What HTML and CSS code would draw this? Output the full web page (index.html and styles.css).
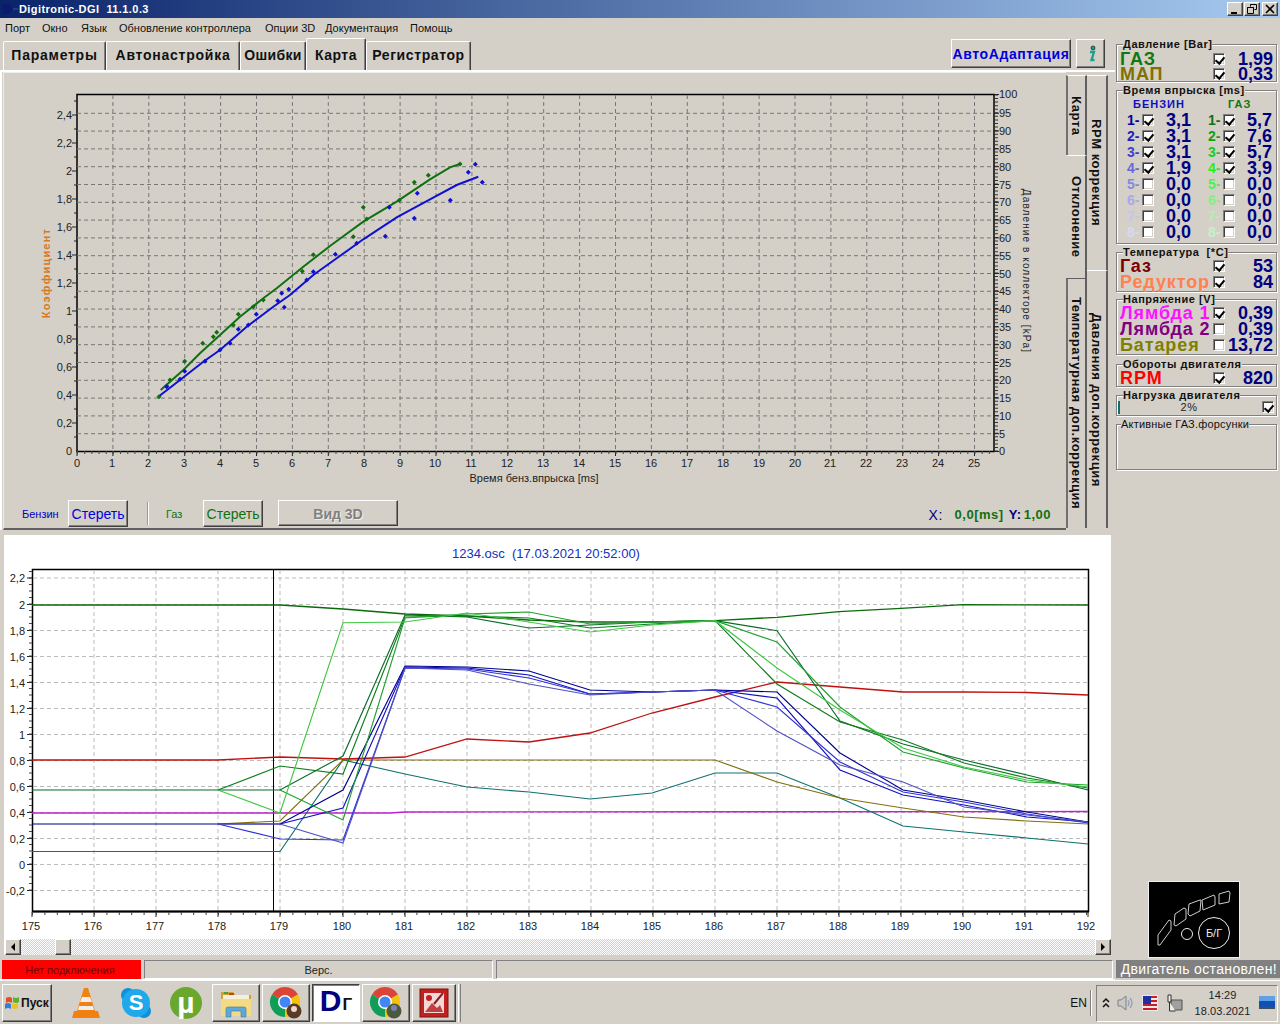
FILE: index.html
```html
<!DOCTYPE html>
<html lang="ru">
<head>
<meta charset="utf-8">
<title>Digitronic-DGI 11.1.0.3</title>
<link rel="stylesheet" href="styles.css">
</head>
<body>
<div class="app">
  <header class="titlebar">
    <svg class="app-ico" width="16" height="14" viewBox="0 0 16 14"><path class="ico-navy" d="M1 2h6l4 5-4 5H1z"/><path class="ico-navy2" d="M11 6h5v2h-5z"/></svg>
    <span class="title-text">Digitronic-DGI&nbsp; 11.1.0.3</span>
    <div class="winbtns">
      <button class="winbtn"><svg width="10" height="10" viewBox="0 0 10 10"><path d="M1 8h6v2H1z"/></svg></button>
      <button class="winbtn"><svg width="10" height="10" viewBox="0 0 10 10"><path class="ico-line" d="M3.500 2.500V.5h6v5h-2M.5 3.500h6v6h-6zM.5 3.500h6"/></svg></button>
      <button class="winbtn winbtn-close"><svg width="10" height="10" viewBox="0 0 10 10"><path class="ico-line2" d="M1 1l8 8M9 1l-8 8"/></svg></button>
    </div>
  </header>
  <nav class="menu">
    <span class="m1">Порт</span><span class="m2">Окно</span><span class="m3">Язык</span><span class="m4">Обновление контроллера</span><span class="m5">Опции 3D</span><span class="m6">Документация</span><span class="m7">Помощь</span>
  </nav>
  <div class="body-grid">
    <main class="leftcol">
      <div class="tabbar">
        <div class="tab t1">Параметры</div>
        <div class="tab t2">Автонастройка</div>
        <div class="tab t3">Ошибки</div>
        <div class="tab t4 active">Карта</div>
        <div class="tab t5">Регистратор</div>
        <button class="btn adapt">АвтоАдаптация</button>
        <button class="btn info"><svg width="12" height="18" viewBox="0 0 12 18"><circle class="i-fill" cx="8" cy="3" r="2"/><path class="i-body" d="M5 7h4L6.500 15h3"/></svg></button>
      </div>
      <section class="tabpage">
        <div class="mapwrap">
          <svg class="chart-top" width="1063" height="426" viewBox="3 74 1063 426">
            <rect class="plot-top" x="77" y="94.500" width="917" height="357"/>
            <path class="grid-top" d="M77 433.700H994M77 415.900H994M77 398.100H994M77 380.300H994M77 362.500H994M77 344.700H994M77 326.900H994M77 309.100H994M77 291.300H994M77 273.500H994M77 255.700H994M77 237.900H994M77 220.100H994M77 202.300H994M77 184.500H994M77 166.700H994M77 148.900H994M77 131.100H994M77 113.300H994M112.900 95V451M148.800 95V451M184.700 95V451M220.600 95V451M256.500 95V451M292.400 95V451M328.300 95V451M364.200 95V451M400.100 95V451M436 95V451M471.900 95V451M507.800 95V451M543.700 95V451M579.600 95V451M615.500 95V451M651.400 95V451M687.300 95V451M723.200 95V451M759.100 95V451M795 95V451M830.900 95V451M866.800 95V451M902.700 95V451M938.600 95V451M974.500 95V451"/>
            <path class="tick" d="M72 423H77M72 395H77M72 367H77M72 339H77M72 311H77M72 283H77M72 255H77M72 227H77M72 199H77M72 171H77M72 143H77M72 115H77M74 437H77M74 409H77M74 381H77M74 353H77M74 325H77M74 297H77M74 269H77M74 241H77M74 213H77M74 185H77M74 157H77M74 129H77M74 101H77M77 451V456M112.900 451V456M148.800 451V456M184.700 451V456M220.600 451V456M256.500 451V456M292.400 451V456M328.300 451V456M364.200 451V456M400.100 451V456M436 451V456M471.900 451V456M507.800 451V456M543.700 451V456M579.600 451V456M615.500 451V456M651.400 451V456M687.300 451V456M723.200 451V456M759.100 451V456M795 451V456M830.900 451V456M866.800 451V456M902.700 451V456M938.600 451V456M974.500 451V456"/>
            <line class="ticks-x" x1="77" y1="452.500" x2="994" y2="452.500"/>
            <line class="ticks-r" x1="996" y1="451.500" x2="996" y2="94"/>
            <path class="tick" d="M994 433.700H999M994 415.900H999M994 398.100H999M994 380.300H999M994 362.500H999M994 344.700H999M994 326.900H999M994 309.100H999M994 291.300H999M994 273.500H999M994 255.700H999M994 237.900H999M994 220.100H999M994 202.300H999M994 184.500H999M994 166.700H999M994 148.900H999M994 131.100H999M994 113.300H999M994 451.500H999M994 94.500H999"/>
            <polyline class="curve-g" points="160.700,390 170,381.700 183.300,370 200,353.300 220,335 240,316.700 263.300,298.300 276.700,288.300 303.300,266.700 330,246 363.300,221.700 396.700,201.700 430,179.300 450,167.300 460,164"/>
            <polyline class="curve-b" points="158.300,396.700 180,380 203.300,361.700 220,350 246.700,326.700 273.300,306.700 290,295 313.300,275 336.700,258.300 363.300,239.300 396.700,217.300 430,199.300 456.700,185 478.300,176.700"/>
            <path class="pts-g" d="M159 394.200l2.500 2.500-2.500 2.500-2.500-2.500zM166.700 383.500l2.500 2.500-2.500 2.500-2.500-2.500zM170 377.500l2.500 2.500-2.500 2.500-2.500-2.500zM184.700 358.800l2.500 2.500-2.500 2.500-2.500-2.500zM202.700 340.800l2.500 2.500-2.500 2.500-2.500-2.500zM213.300 334.200l2.500 2.500-2.500 2.500-2.500-2.500zM216.700 329.800l2.500 2.500-2.500 2.500-2.500-2.500zM233.300 322.500l2.500 2.500-2.500 2.500-2.500-2.500zM238.300 311.800l2.500 2.500-2.500 2.500-2.500-2.500zM253.300 304.200l2.500 2.500-2.500 2.500-2.500-2.500zM263.300 297.500l2.500 2.500-2.500 2.500-2.500-2.500zM302.300 268.800l2.500 2.500-2.500 2.500-2.500-2.500zM313.300 252.200l2.500 2.500-2.500 2.500-2.500-2.500zM353.300 234.200l2.500 2.500-2.500 2.500-2.500-2.500zM363.300 204.800l2.500 2.500-2.500 2.500-2.500-2.500zM366.700 216.500l2.500 2.500-2.500 2.500-2.500-2.500zM399.300 197.800l2.500 2.500-2.500 2.500-2.500-2.500zM414.300 179.800l2.500 2.500-2.500 2.500-2.500-2.500zM428.300 172.800l2.500 2.500-2.500 2.500-2.500-2.500zM460 161.500l2.500 2.500-2.500 2.500-2.500-2.500z"/>
            <path class="pts-b" d="M166.700 384.200l2.500 2.500-2.500 2.500-2.500-2.500zM180 376.800l2.500 2.500-2.500 2.500-2.500-2.500zM184.700 368.800l2.500 2.500-2.500 2.500-2.500-2.500zM205 358.800l2.500 2.500-2.500 2.500-2.500-2.500zM220 347.500l2.500 2.500-2.500 2.500-2.500-2.500zM230 340.800l2.500 2.500-2.500 2.500-2.500-2.500zM238.300 326.800l2.500 2.500-2.500 2.500-2.500-2.500zM248.300 322.500l2.500 2.500-2.500 2.500-2.500-2.500zM256.300 311.800l2.500 2.500-2.500 2.500-2.500-2.500zM277.700 298.200l2.500 2.500-2.500 2.500-2.500-2.500zM281.700 290.800l2.500 2.500-2.500 2.500-2.500-2.500zM284.300 304.800l2.500 2.500-2.500 2.500-2.500-2.500zM288.700 286.800l2.500 2.500-2.500 2.500-2.500-2.500zM306.700 277.500l2.500 2.500-2.500 2.500-2.500-2.500zM313.300 269.200l2.500 2.500-2.500 2.500-2.500-2.500zM335.300 251.800l2.500 2.500-2.500 2.500-2.500-2.500zM356.700 240.800l2.500 2.500-2.500 2.500-2.500-2.500zM385.300 233.800l2.500 2.500-2.500 2.500-2.500-2.500zM389.300 204.800l2.500 2.500-2.500 2.500-2.500-2.500zM414.300 215.800l2.500 2.500-2.500 2.500-2.500-2.500zM417.300 190.800l2.500 2.500-2.500 2.500-2.500-2.500zM450.300 197.800l2.500 2.500-2.500 2.500-2.500-2.500zM468.300 169.800l2.500 2.500-2.500 2.500-2.500-2.500zM475.300 161.800l2.500 2.500-2.500 2.500-2.500-2.500zM482.300 179.800l2.500 2.500-2.500 2.500-2.500-2.500z"/>
            <g class="lab lab-end">
              <text x="72" y="455">0</text><text x="72" y="427">0,2</text><text x="72" y="399">0,4</text><text x="72" y="371">0,6</text><text x="72" y="343">0,8</text><text x="72" y="315">1</text><text x="72" y="287">1,2</text><text x="72" y="259">1,4</text><text x="72" y="231">1,6</text><text x="72" y="203">1,8</text><text x="72" y="175">2</text><text x="72" y="147">2,2</text><text x="72" y="119">2,4</text>
            </g>
            <g class="lab">
              <text x="999" y="455">0</text><text x="999" y="437.700">5</text><text x="999" y="419.900">10</text><text x="999" y="402.100">15</text><text x="999" y="384.300">20</text><text x="999" y="366.500">25</text><text x="999" y="348.700">30</text><text x="999" y="330.900">35</text><text x="999" y="313.100">40</text><text x="999" y="295.300">45</text><text x="999" y="277.500">50</text><text x="999" y="259.700">55</text><text x="999" y="241.900">60</text><text x="999" y="224.100">65</text><text x="999" y="206.300">70</text><text x="999" y="188.500">75</text><text x="999" y="170.700">80</text><text x="999" y="152.900">85</text><text x="999" y="135.100">90</text><text x="999" y="117.300">95</text><text x="999" y="98">100</text>
            </g>
            <g class="lab lab-mid">
              <text x="77" y="467">0</text><text x="112" y="467">1</text><text x="148" y="467">2</text><text x="184" y="467">3</text><text x="220" y="467">4</text><text x="256" y="467">5</text><text x="292" y="467">6</text><text x="328" y="467">7</text><text x="364" y="467">8</text><text x="400" y="467">9</text><text x="435" y="467">10</text><text x="471" y="467">11</text><text x="507" y="467">12</text><text x="543" y="467">13</text><text x="579" y="467">14</text><text x="615" y="467">15</text><text x="651" y="467">16</text><text x="687" y="467">17</text><text x="723" y="467">18</text><text x="759" y="467">19</text><text x="795" y="467">20</text><text x="830" y="467">21</text><text x="866" y="467">22</text><text x="902" y="467">23</text><text x="938" y="467">24</text><text x="974" y="467">25</text>
              <text x="534" y="482">Время бенз.впрыска [ms]</text>
            </g>
            <text class="axis-l" transform="translate(50 273) rotate(-90)">Коэффициент</text>
            <text class="axis-r" transform="translate(1023 271) rotate(90)">Давление в коллекторе [kPa]</text>
          </svg>
          <div class="controls">
            <span class="ctl-benz">Бензин</span>
            <button class="btn ctl-btn blue">Стереть</button>
            <span class="ctl-sep"></span>
            <span class="ctl-gas">Газ</span>
            <button class="btn ctl-btn green">Стереть</button>
            <button class="btn view3d">Вид 3D</button>
            <div class="readout"><span class="x-lab">X:</span><span class="x-val">0,0[ms]</span><span class="y-lab">Y:</span><span class="y-val">1,00</span></div>
          </div>
        </div>
        <div class="vcol vcol1">
          <div class="vtab vt-karta">Карта</div>
          <div class="vtab vt-dev">Отклонение</div>
          <div class="vtab vt-temp">Температурная доп.коррекция</div>
        </div>
        <div class="vcol vcol2">
          <div class="vtab vt-rpm">RPM коррекция</div>
          <div class="vtab vt-press">Давления доп.коррекция</div>
        </div>
      </section>
      <section class="oscpanel">
        <svg class="chart-osc" width="1108" height="404" viewBox="3 535 1108 404">
          <text class="osc-title" x="546" y="558">1234.osc&#160; (17.03.2021 20:52:00)</text>
          <rect class="plot-osc" x="32.500" y="569.500" width="1056" height="342"/>
          <line class="plot-base" x1="32" y1="911.500" x2="1089" y2="911.500"/>
          <path class="grid-osc" d="M33 578H1088M33 630.500H1088M33 656.500H1088M33 682.500H1088M33 708.500H1088M33 734.500H1088M33 760.500H1088M33 786.500H1088M33 812.500H1088M33 838.500H1088M33 864.500H1088M33 890.500H1088M33 604.500H1088M94 570V911M156 570V911M218 570V911M280 570V911M343 570V911M405 570V911M467 570V911M529 570V911M591 570V911M653 570V911M715 570V911M777 570V911M839 570V911M901 570V911M963 570V911M1025 570V911"/>
          <path class="tick" d="M27 578H32M27 604.500H32M27 630.500H32M27 656.500H32M27 682.500H32M27 708.500H32M27 734.500H32M27 760.500H32M27 786.500H32M27 812.500H32M27 838.500H32M27 864.500H32M27 890.500H32M32 912V917M94 912V917M156 912V917M218 912V917M280 912V917M343 912V917M405 912V917M467 912V917M529 912V917M591 912V917M653 912V917M715 912V917M777 912V917M839 912V917M901 912V917M963 912V917M1025 912V917M1088 912V917"/>
          <line class="ticks-ox" x1="32" y1="913.500" x2="1088" y2="913.500"/>
          <line class="ticks-oy" x1="30.500" y1="890.500" x2="30.500" y2="570"/>
          <line class="cursor" x1="273.500" y1="569" x2="273.500" y2="911"/>
          <polyline class="l l-mag" points="32,813 390,813 405,812 1088,811.500"/>
          <polyline class="l l-teal" points="32,851.500 280,851.500 343,760 405,774 467,787 529,792 590,799 652,793 715,773 777,773 840,798 903,826 964,832 1027,838 1088,844"/>
          <polyline class="l l-olive" points="218,824 280,821 343,760 715,760 777,782 840,798 903,808 964,817 1027,821 1088,824"/>
          <polyline class="l l-red" points="32,760 218,760 280,757 343,759 405,757 467,739 529,742 590,733 652,713 715,697 777,682 840,687 903,692 964,692 1027,692.500 1088,695"/>
          <polyline class="l l-b1" points="32,824 280,824 343,790 405,666 467,667 529,671 590,690 652,692 715,690 777,692 840,753 903,790 964,800 1027,812 1088,822"/>
          <polyline class="l l-b2" points="280,824 343,808 405,667 467,668 529,675 590,694 652,692 715,690 777,698 840,770 903,795 964,805 1027,817 1088,822"/>
          <polyline class="l l-b3" points="218,824 280,839 343,840 405,668 467,669 529,678 590,694 652,692 715,690 777,707 840,762 903,792 964,802 1027,814 1088,823"/>
          <polyline class="l l-b4" points="218,824 280,824 343,843 405,668 467,670 529,684 590,695 652,692 715,690 777,731 840,765 903,782 964,807 1027,815 1088,822"/>
          <polyline class="l l-g0" points="32,605 280,605 343,609 405,614 467,616 529,620 590,622 652,622 715,620.700 777,617.300 839,611.700 901,608.300 963,604.700 1088,605"/>
          <polyline class="l l-g1" points="32,790 280,790 343,756 405,615 467,617 529,628 590,625 652,622 715,620.700 777,630.700 840,721 903,744 964,760 1027,775 1088,790"/>
          <polyline class="l l-g2" points="218,790 280,766 343,774 405,617 467,616 529,618 590,628 652,624 715,620.700 777,684 840,722 903,740 964,763 1027,778 1088,788"/>
          <polyline class="l l-g3" points="280,790 343,820 405,618 467,614 529,612 590,624 652,622 715,620.700 777,642 840,707 903,752 964,768 1027,782 1088,785"/>
          <polyline class="l l-g4" points="218,790 280,813 343,622.700 405,622 467,613 529,622 590,632 652,625 715,620.700 777,668 840,710 903,748 964,767 1027,780 1088,787"/>
          <g class="lab lab-end">
            <text x="25" y="582">2,2</text><text x="25" y="608.500">2</text><text x="25" y="634.500">1,8</text><text x="25" y="660.500">1,6</text><text x="25" y="686.500">1,4</text><text x="25" y="712.500">1,2</text><text x="25" y="738.500">1</text><text x="25" y="764.500">0,8</text><text x="25" y="790.500">0,6</text><text x="25" y="816.500">0,4</text><text x="25" y="842.500">0,2</text><text x="25" y="868.500">0</text><text x="25" y="894.500">-0,2</text>
          </g>
          <g class="lab lab-mid">
            <text x="31" y="930">175</text><text x="93" y="930">176</text><text x="155" y="930">177</text><text x="217" y="930">178</text><text x="279" y="930">179</text><text x="342" y="930">180</text><text x="404" y="930">181</text><text x="466" y="930">182</text><text x="528" y="930">183</text><text x="590" y="930">184</text><text x="652" y="930">185</text><text x="714" y="930">186</text><text x="776" y="930">187</text><text x="838" y="930">188</text><text x="900" y="930">189</text><text x="962" y="930">190</text><text x="1024" y="930">191</text><text x="1086" y="930">192</text>
          </g>
        </svg>
        <div class="scrollbar">
          <button class="sb-btn"><svg width="6" height="8" viewBox="0 0 6 8"><path d="M5 0v8L1 4z"/></svg></button>
          <div class="sb-track"><div class="sb-thumb"></div></div>
          <button class="sb-btn"><svg width="6" height="8" viewBox="0 0 6 8"><path d="M1 0v8l4-4z"/></svg></button>
        </div>
      </section>
      <footer class="status">
        <div class="st st-red">Нет подключения</div>
        <div class="st st-ver">Верс.</div>
        <div class="st st-rest"></div>
      </footer>
    </main>
    <aside class="side">
      <fieldset class="gb gb-press">
        <legend>Давление [Bar]</legend>
        <div class="row r-big"><span class="big c-gas">ГАЗ</span><span class="cb on"></span><b class="val">1,99</b></div>
        <div class="row r-big"><span class="big c-map">МАП</span><span class="cb on"></span><b class="val">0,33</b></div>
      </fieldset>
      <fieldset class="gb gb-inj">
        <legend>Время впрыска [ms]</legend>
        <div class="inj-head"><b class="h-benz">БЕНЗИН</b><b class="h-gas">ГАЗ</b></div>
        <div class="inj">
          <span class="n nb1">1-</span><span class="cb on"></span><b class="iv">3,1</b><span class="n ng1">1-</span><span class="cb on"></span><b class="iv">5,7</b>
          <span class="n nb2">2-</span><span class="cb on"></span><b class="iv">3,1</b><span class="n ng2">2-</span><span class="cb on"></span><b class="iv">7,6</b>
          <span class="n nb3">3-</span><span class="cb on"></span><b class="iv">3,1</b><span class="n ng3">3-</span><span class="cb on"></span><b class="iv">5,7</b>
          <span class="n nb4">4-</span><span class="cb on"></span><b class="iv">1,9</b><span class="n ng4">4-</span><span class="cb on"></span><b class="iv">3,9</b>
          <span class="n nb5">5-</span><span class="cb"></span><b class="iv">0,0</b><span class="n ng5">5-</span><span class="cb"></span><b class="iv">0,0</b>
          <span class="n nb6">6-</span><span class="cb"></span><b class="iv">0,0</b><span class="n ng6">6-</span><span class="cb"></span><b class="iv">0,0</b>
          <span class="n nb7">7-</span><span class="cb"></span><b class="iv">0,0</b><span class="n ng7">7-</span><span class="cb"></span><b class="iv">0,0</b>
          <span class="n nb8">8-</span><span class="cb"></span><b class="iv">0,0</b><span class="n ng8">8-</span><span class="cb"></span><b class="iv">0,0</b>
        </div>
      </fieldset>
      <fieldset class="gb gb-temp">
        <legend>Температура&nbsp; [*C]</legend>
        <div class="row"><span class="big c-t1">Газ</span><span class="cb on"></span><b class="val">53</b></div>
        <div class="row"><span class="big c-t2">Редуктор</span><span class="cb on"></span><b class="val">84</b></div>
      </fieldset>
      <fieldset class="gb gb-volt">
        <legend>Напряжение [V]</legend>
        <div class="row"><span class="big c-l1">Лямбда 1</span><span class="cb on"></span><b class="val">0,39</b></div>
        <div class="row"><span class="big c-l2">Лямбда 2</span><span class="cb"></span><b class="val">0,39</b></div>
        <div class="row"><span class="big c-bat">Батарея</span><span class="cb"></span><b class="val">13,72</b></div>
      </fieldset>
      <fieldset class="gb gb-rpm">
        <legend>Обороты двигателя</legend>
        <div class="row"><span class="big c-rpm">RPM</span><span class="cb on"></span><b class="val">820</b></div>
      </fieldset>
      <fieldset class="gb gb-load">
        <legend>Нагрузка двигателя</legend>
        <div class="loadrow"><span class="loadbar"></span><span class="loadval">2%</span><span class="cb on"></span></div>
      </fieldset>
      <fieldset class="gb gb-act">
        <legend class="plain">Активные ГАЗ.форсунки</legend>
      </fieldset>
      <div class="engine">
        <svg width="92" height="77" viewBox="0 0 92 77">
          <path class="eng" d="M10 64V54L21 39l2 1v9L12 64zM26 44l1-11 9-6 2 1v10l-10 7zM40 33l1-10 11-4 1 0-1 11-10 5zM54 19l12-5 1 2v8l-12 5zM71 13l10-3 1 2-1 9-10 2z"/>
          <circle class="eng2" cx="39" cy="53" r="5.500"/>
          <circle class="eng2" cx="66" cy="52" r="15.500"/>
          <text class="eng-t" x="66" y="56">Б/Г</text>
        </svg>
      </div>
      <div class="engstate">Двигатель остановлен!</div>
    </aside>
  </div>
  <div class="taskbar">
    <button class="start">
      <svg width="15" height="14" viewBox="0 0 15 14"><path class="f-r" d="M1 2q3-2 6 0v5q-3-2-6 0z"/><path class="f-g" d="M8 1q3 2 6 0v5q-3 2-6 0z"/><path class="f-b" d="M0 8q3-2 6 0v5q-3-2-6 0z"/><path class="f-y" d="M7 7q3 2 6 0v5q-3 2-6 0z"/></svg>
      <span>Пуск</span>
    </button>
    <div class="task plain-task"><svg width="28" height="32" viewBox="0 0 28 32"><path class="vlc-o" d="M12 1h4l7 23h3l2 7H0l2-7h3z"/><path class="vlc-w" d="M10 10h8l2 5H8zM7 19h14l1 4H6z"/></svg></div>
    <div class="task plain-task"><svg width="32" height="32" viewBox="0 0 32 32"><circle class="sk-a" cx="8" cy="8" r="7"/><circle class="sk-a" cx="24" cy="24" r="7"/><circle class="sk-b" cx="16" cy="16" r="14"/><text class="sk-t" x="16" y="23">S</text></svg></div>
    <div class="task plain-task"><svg width="34" height="34" viewBox="0 0 34 34"><circle class="ut-a" cx="17" cy="17" r="16"/><text class="ut-t" x="17" y="27">µ</text></svg></div>
    <div class="task"><svg width="32" height="30" viewBox="0 0 32 30"><path class="fo-b" d="M1 4h12l2 3h16v21H1z"/><path class="fo-p" d="M3 7h26v6H3z"/><path class="fo-r" d="M9 5h5v2H9z"/><path class="fo-g" d="M4 4h4v2H4z"/><path class="fo-y" d="M1 11h30v17H1z"/><path class="fo-s" d="M6 29v-8q0-2 2-2h16q2 0 2 2v8h-5v-6H11v6z"/></svg></div>
    <div class="task"><svg width="34" height="34" viewBox="0 0 34 34"><path class="ch-r" d="M16 16L3 8.500A15 15 0 0 1 29 8.500z"/><path class="ch-y" d="M16 16L29 8.500A15 15 0 0 1 16 31z"/><path class="ch-g" d="M16 16L16 31A15 15 0 0 1 3 8.500z"/><circle class="ch-w" cx="16" cy="16" r="7"/><circle class="ch-b" cx="16" cy="16" r="5.500"/><circle class="av1" cx="25" cy="25" r="7.500"/><circle class="av1b" cx="25" cy="23" r="3"/></svg></div>
    <div class="task pressed"><span class="dt-d">D</span><span class="dt-g">Г</span></div>
    <div class="task"><svg width="34" height="34" viewBox="0 0 34 34"><path class="ch-r" d="M16 16L3 8.500A15 15 0 0 1 29 8.500z"/><path class="ch-y" d="M16 16L29 8.500A15 15 0 0 1 16 31z"/><path class="ch-g" d="M16 16L16 31A15 15 0 0 1 3 8.500z"/><circle class="ch-w" cx="16" cy="16" r="7"/><circle class="ch-b" cx="16" cy="16" r="5.500"/><circle class="av2" cx="25" cy="25" r="7.500"/><circle class="av2b" cx="25" cy="22" r="3"/></svg></div>
    <div class="task task-ppt"><svg width="30" height="30" viewBox="0 0 30 30"><rect class="pp-o" x="1" y="1" width="28" height="28"/><rect class="pp-i" x="5" y="5" width="20" height="20"/><path class="pp-t" d="M6 24l7-9 5 5 3-3 3 7z"/><circle class="pp-c" cx="10" cy="10" r="3"/><path class="pp-p" d="M15 16l9-11"/></svg></div>
    <span class="grip"></span>
    <span class="lang">EN</span>
    <span class="lang-sep"></span>
    <div class="tray">
      <svg width="8" height="12" viewBox="0 0 8 12"><path class="tr-k" d="M1 5l3-3 3 3M1 10l3-3 3 3"/></svg>
      <svg width="18" height="18" viewBox="0 0 18 18"><path class="tr-sp" d="M1 6h3l5-4v14l-5-4H1z"/><path class="tr-l" d="M11 6q2 3 0 6M13 4q4 5 0 10"/></svg>
      <svg width="16" height="16" viewBox="0 0 16 16"><rect class="fl-w" width="16" height="16"/><path class="fl-r" d="M1 1h14v2H1zM1 5h14v2H1zM1 9h14v2H1zM1 13h14v2H1z"/><rect class="fl-b" x="1" y="1" width="8" height="8"/></svg>
      <svg width="18" height="18" viewBox="0 0 18 18"><path class="tr-net" d="M6 6h11v10H6z"/><path class="tr-net2" d="M3 1h3v7H3zM4.500 8v9h6"/></svg>
      <div class="clock"><span>14:29</span><span>18.03.2021</span></div>
      <svg width="16" height="16" viewBox="0 0 16 16"><rect class="ds-b" y="1" width="16" height="11"/><rect class="ds-l" y="1" width="16" height="5"/><rect class="ds-d" y="12" width="16" height="2"/></svg>
    </div>
  </div>
</div>
</body>
</html>
```
FILE: styles.css
```css
* { box-sizing: border-box; }
html, body { margin: 0; padding: 0; }
body { background: #d4d0c8; font-family: "Liberation Sans", Arial, sans-serif; font-size: 11px; color: #000; overflow: hidden; }
.app { width: 1280px; height: 1024px; display: flex; flex-direction: column; background: #d4d0c8; }

/* title bar */
.titlebar { height: 18px; flex: none; display: flex; align-items: center; background: linear-gradient(90deg, #0a246a, #a6caf0); color: #fff; }
.app-ico { margin: 0 1px 0 2px; }
.ico-navy { fill: #0a1a70; }
.ico-navy2 { fill: #2a3a80; }
.title-text { font: bold 11px "Liberation Sans", sans-serif; letter-spacing: .42px; white-space: pre; }
.winbtns { margin-left: auto; display: flex; padding-right: 2px; gap: 0; }
.winbtn { width: 16px; height: 14px; padding: 0; margin: 0 0 0 1px; display: flex; align-items: center; justify-content: center; background: #d4d0c8; border: 1px solid; border-color: #fff #404040 #404040 #fff; box-shadow: inset -1px -1px #808080; }
.winbtn-close { margin-left: 2px; }
.ico-line { fill: none; stroke: #000; stroke-width: 1; }
.ico-line2 { fill: none; stroke: #000; stroke-width: 1.6; }

/* menu */
.menu { height: 20px; flex: none; display: flex; align-items: center; font-size: 11px; color: #111; padding-left: 5px; }
.m1 { width: 37px; } .m2 { width: 39px; } .m3 { width: 38px; } .m4 { width: 146px; } .m5 { width: 60px; } .m6 { width: 85px; }

/* main layout */
.body-grid { flex: 1; min-height: 0; display: grid; grid-template-columns: 1115px 165px; }
.leftcol { display: flex; flex-direction: column; min-width: 0; }

/* top tabs */
.tabbar { height: 32px; flex: none; display: flex; align-items: flex-end; padding-left: 3px; }
.tab { height: 29px; padding-bottom: 3px; display: flex; align-items: center; justify-content: center; font: bold 14px "Liberation Sans", sans-serif; letter-spacing: .75px; color: #111; border: 1px solid; border-color: #fff #404040 transparent #fff; border-bottom: 0; box-shadow: inset -1px 0 #808080; border-radius: 2px 2px 0 0; }
.t1 { width: 103px; } .t2 { width: 134px; } .t3 { width: 66px; letter-spacing: .35px; } .t4 { width: 60px; height: 32px; letter-spacing: .5px; padding: 0; } .t5 { width: 105px; letter-spacing: .6px; }
.btn { background: #d4d0c8; border: 1px solid; border-color: #fff #404040 #404040 #fff; box-shadow: inset -1px -1px #808080; padding: 0; font-family: "Liberation Sans", sans-serif; }
.adapt { width: 120px; height: 29px; margin: 0 5px 2px auto; color: #0000e0; font-weight: bold; font-size: 14px; letter-spacing: .6px; white-space: nowrap; }
.info { width: 29px; height: 29px; margin: 0 10px 2px 0; display: flex; align-items: center; justify-content: center; }
.i-fill { fill: #20a090; stroke: #000; stroke-width: .6; }
.i-body { fill: none; stroke: #20a090; stroke-width: 2.4; }

/* tab page */
.tabpage { height: 460px; flex: none; display: flex; border-top: 2px solid #fff; border-left: 2px solid #fff; padding: 0 7px 0 1px; }
.mapwrap { width: 1063px; flex: none; display: flex; flex-direction: column; border-top: 1px solid #eee; border-left: 1px solid #eee; border-bottom: 2px solid #606060; }
.mapwrap svg { display: block; margin: 1px 0 0 -1px; flex: none; }
.chart-top text, .chart-osc text { font-family: "Liberation Sans", sans-serif; }
.plot-top { fill: none; stroke: #000; stroke-width: 1.5; }
.grid-top { fill: none; stroke: #777; stroke-width: 1; stroke-dasharray: 4 3; }
.tick { fill: none; stroke: #222; stroke-width: 1; }
.ticks-x { stroke: #444; stroke-width: 3; stroke-dasharray: 1 6.18; }
.ticks-r { stroke: #333; stroke-width: 4; stroke-dasharray: 1 2.56; }
.curve-g { fill: none; stroke: #107010; stroke-width: 2; }
.curve-b { fill: none; stroke: #1010d0; stroke-width: 2; }
.pts-g { fill: #107010; }
.pts-b { fill: #1010d0; }
.lab { font-size: 11px; fill: #222; }
.lab-end { text-anchor: end; }
.lab-mid { text-anchor: middle; }
.axis-l { font-size: 11px; font-weight: bold; fill: #d87820; text-anchor: middle; letter-spacing: 1.2px; }
.axis-r { font-size: 10px; fill: #222; text-anchor: middle; letter-spacing: 1.1px; }

/* controls */
.controls { flex: 1; display: flex; align-items: flex-start; padding: 0 15px 0 18px; min-height: 0; }
.ctl-benz { margin-top: 8px; width: 46px; color: #0000c0; font-size: 11px; }
.ctl-btn { width: 60px; height: 27px; font-size: 14px; }
.blue { color: #0000e0; }
.green { color: #107010; }
.ctl-sep { width: 2px; height: 23px; margin: 2px 0 0 19px; background: #fff; border-left: 1px solid #999; }
.ctl-gas { margin: 8px 0 0 17px; width: 37px; color: #107010; font-size: 11px; }
.view3d { width: 120px; height: 26px; margin-left: 15px; padding-top: 1px; color: #808080; font-weight: bold; font-size: 14px; text-shadow: 1px 1px #eee; }
.readout { margin-left: auto; margin-top: 7px; display: flex; font-size: 13px; font-weight: bold; letter-spacing: .5px; }
.x-lab { width: 26px; color: #000080; font-weight: normal; font-size: 14px; }
.x-val { color: #107010; margin-right: 5px; }
.y-lab { color: #000080; margin-right: 2px; }
.y-val { color: #107010; }

/* vertical tabs */
.vcol { width: 21px; flex: none; display: flex; flex-direction: column; padding-top: 3px; }
.vtab { writing-mode: vertical-rl; display: flex; align-items: center; justify-content: center; font: bold 13px "Liberation Sans", sans-serif; letter-spacing: .55px; color: #111; border-top: 1px solid #fff; border-right: 2px solid #606060; }
.vcol1 .vtab { border-left: 2px solid #707070; }
.vt-karta { height: 80px; }
.vt-dev { height: 123px; letter-spacing: .4px; }
.vcol1 .vt-dev { border-left-color: transparent; }
.vt-temp { height: 250px; border-top-color: #606060; }
.vt-rpm { height: 195px; }
.vt-press { height: 258px; }

/* oscillogram panel */
.oscpanel { margin: 5px 4px 0 4px; width: 1107px; height: 420px; flex: none; background: #fff; display: flex; flex-direction: column; }
.chart-osc { display: block; flex: none; margin-left: -1px; }
.osc-title { font-size: 13px; fill: #1030c0; text-anchor: middle; }
.plot-osc { fill: #fff; stroke: #000; stroke-width: 1.5; }
.plot-base { stroke: #000; stroke-width: 2; }
.grid-osc { fill: none; stroke: #bbb; stroke-width: 1; stroke-dasharray: 4 3; }
.ticks-ox { stroke: #444; stroke-width: 3; stroke-dasharray: 1 11.4; }
.ticks-oy { stroke: #444; stroke-width: 3; stroke-dasharray: 1 5.5; }
.cursor { stroke: #000; stroke-width: 1; }
.l { fill: none; stroke-width: 1.15; }
.l-mag { stroke: #c020d0; stroke-width: 1.3; }
.l-teal { stroke: #107070; }
.l-olive { stroke: #807010; }
.l-red { stroke: #c01010; stroke-width: 1.3; }
.l-b1 { stroke: #000090; }
.l-b2 { stroke: #1010c0; }
.l-b3 { stroke: #3030d8; }
.l-b4 { stroke: #5050c0; }
.l-g0 { stroke: #0a6a0a; stroke-width: 1.3; }
.l-g1 { stroke: #0a6a2a; }
.l-g2 { stroke: #0c7c1c; }
.l-g3 { stroke: #20a030; }
.l-g4 { stroke: #40c840; }
.scrollbar { height: 16px; flex: none; display: flex; margin-left: 1px; }
.sb-btn { width: 16px; height: 16px; padding: 0; background: #d4d0c8; border: 1px solid; border-color: #fff #404040 #404040 #fff; box-shadow: inset -1px -1px #808080; display: flex; align-items: center; justify-content: center; }
.sb-track { flex: 1; background: conic-gradient(#d4d0c8 25%, #fff 0 50%, #d4d0c8 0 75%, #fff 0) 0 0 / 2px 2px; padding-left: 34px; }
.sb-thumb { width: 16px; height: 16px; background: #d4d0c8; border: 1px solid; border-color: #fff #404040 #404040 #fff; box-shadow: inset -1px -1px #808080; }

/* status bar */
.status { height: 20px; flex: none; margin-top: 5px; display: flex; padding-left: 2px; font-size: 11px; gap: 3px; border-bottom: 1px solid #fff; }
.st { display: flex; align-items: center; justify-content: center; border: 1px solid; border-color: #808080 #fff #fff #808080; height: 19px; }
.st-red { width: 139px; padding-right: 3px; background: #fe0000; color: #700; border-color: #fe0000; }
.st-ver { width: 349px; color: #222; }
.st-rest { flex: 1; margin-right: 2px; }

/* side panel */
.side { display: flex; flex-direction: column; padding: 0 3px 0 1px; }
.gb { margin: 0; padding: 0; min-width: 0; flex: none; border: 1px solid #808080; box-shadow: 1px 1px #fff, inset 1px 1px #fff; }
.gb legend { margin-left: 6px; padding: 0; background: #d4d0c8; font: bold 11px/13px "Liberation Sans", sans-serif; letter-spacing: .55px; white-space: pre; color: #111; }
.gb legend.plain { font-weight: normal; letter-spacing: .2px; margin-left: 4px; }
.gb-press { height: 44px; }
.gb-inj { height: 160px; margin-top: 2px; }
.gb-temp { height: 46px; margin-top: 2px; }
.gb-volt { height: 62px; margin-top: 1px; }
.gb-rpm { height: 29px; margin-top: 3px; }
.gb-load { height: 27px; margin-top: 2px; }
.gb-act { height: 52px; margin-top: 2px; }
.row { display: flex; align-items: center; height: 16px; padding-left: 3px; }
.r-big { height: 15px; }
.gb-temp .row:first-of-type, .gb-volt .row:first-of-type, .gb-rpm .row:first-of-type { margin-top: -1px; }
.big { width: 93px; font: bold 18px/16px "Liberation Sans", sans-serif; letter-spacing: .9px; white-space: nowrap; }
.val { flex: 1; text-align: right; font: bold 18px/16px "Liberation Sans", sans-serif; color: #000080; padding-right: 3px; }
.c-gas { color: #107810; } .c-map { color: #807000; }
.c-t1 { color: #800000; } .c-t2 { color: #ff8050; }
.c-l1 { color: #ff10ff; } .c-l2 { color: #800080; } .c-bat { color: #808000; }
.c-rpm { color: #ff0000; }
.cb { width: 12px; height: 12px; flex: none; position: relative; background: #fff; border: 1px solid; border-color: #808080 #fff #fff #808080; box-shadow: inset 1px 1px #404040, inset -1px -1px #d4d0c8; display: block; }
.cb.on::after { content: ""; position: absolute; left: 3px; top: 1px; width: 4px; height: 7px; border: solid #000; border-width: 0 2px 2px 0; transform: rotate(40deg); }
.inj-head { height: 15px; display: flex; font: bold 11px/14px "Liberation Sans", sans-serif; letter-spacing: 1px; }
.h-benz { margin-left: 16px; color: #1010c0; width: 95px; }
.h-gas { color: #107810; }
.inj { display: grid; grid-template-columns: 15px 14px 52px 15px 14px 1fr; grid-auto-rows: 16px; align-items: center; padding-left: 10px; }
.inj .n { font: bold 14px "Liberation Sans", sans-serif; }
.iv { font: bold 18px/16px "Liberation Sans", sans-serif; color: #000080; text-align: right; }
.inj .iv:nth-child(6n+3) { padding-right: 17px; }
.inj .iv:nth-child(6n) { padding-right: 4px; }
.nb1 { color: #0000a0; } .nb2 { color: #2020c0; } .nb3 { color: #4040c8; } .nb4 { color: #6868d8; } .nb5 { color: #8888e0; } .nb6 { color: #a8a8ec; } .nb7 { color: #c4c4f0; } .nb8 { color: #d8d8f4; }
.ng1 { color: #107010; } .ng2 { color: #10a010; } .ng3 { color: #20c820; } .ng4 { color: #20f020; } .ng5 { color: #50f050; } .ng6 { color: #80f080; } .ng7 { color: #b0f0b0; } .ng8 { color: #c8f0c8; }
.loadrow { display: flex; align-items: center; height: 14px; padding: 0 2px 0 1px; margin-top: -2px; }
.loadbar { width: 2px; height: 13px; background: #107070; flex: none; }
.loadval { flex: 1; text-align: center; font-size: 11px; letter-spacing: .5px; color: #222; padding-right: 4px; }
.engine { margin: auto 0 0 32px; width: 92px; height: 77px; background: #000; flex: none; border: 1px solid #eee; }
.engine svg { display: block; margin: -1px; }
.eng { fill: none; stroke: #ccc; stroke-width: 1; }
.eng2 { fill: none; stroke: #eee; stroke-width: 1; }
.eng-t { fill: #eee; font: 11px "Liberation Sans", sans-serif; text-anchor: middle; }
.engstate { height: 18px; flex: none; margin: 2px -3px 2px 0; background: #808080; color: #fff; font-size: 14px; letter-spacing: .35px; line-height: 18px; text-align: right; padding-right: 3px; white-space: nowrap; }

/* taskbar */
.taskbar { height: 44px; flex: none; display: flex; align-items: center; border-top: 1px solid #fff; padding: 2px 2px 1px 2px; gap: 2px; }
.start { width: 50px; height: 38px; display: flex; align-items: center; gap: 1px; padding: 0 0 0 2px; margin-right: 8px; background: #d4d0c8; border: 1px solid; border-color: #fff #404040 #404040 #fff; box-shadow: inset -1px -1px #808080; font: bold 12px "Liberation Sans", sans-serif; color: #111; }
.f-r { fill: #e05020; } .f-g { fill: #60b030; } .f-b { fill: #3080d8; } .f-y { fill: #f0c020; }
.task { width: 48px; height: 38px; display: flex; align-items: center; justify-content: center; border: 1px solid; border-color: #fff #404040 #404040 #fff; box-shadow: inset -1px -1px #808080; }
.plain-task { border-color: transparent; box-shadow: none; }
.task-ppt { width: 44px; }
.pressed { background: #fff; border-color: #404040 #fff #fff #404040; box-shadow: inset 1px 1px #808080; align-items: flex-end; padding-bottom: 5px; }
.dt-d { font: bold 30px/30px "Liberation Sans", sans-serif; color: #000080; }
.dt-g { font: bold 17px/22px "Liberation Sans", sans-serif; color: #111; margin-left: 1px; }
.vlc-o { fill: #f08010; }
.vlc-w { fill: #eee; }
.sk-a { fill: #1090d8; }
.sk-b { fill: #20a8ec; }
.sk-t { fill: #fff; font: bold 22px "Liberation Sans", sans-serif; text-anchor: middle; }
.ut-a { fill: #69a82c; }
.ut-t { fill: #fff; font: bold 30px "Liberation Sans", sans-serif; text-anchor: middle; }
.fo-b { fill: #d0a030; } .fo-p { fill: #f4f0e0; } .fo-r { fill: #c04020; } .fo-g { fill: #40a040; } .fo-y { fill: #f4da80; } .fo-s { fill: #60a8d8; stroke: #3878a8; stroke-width: .6; }
.ch-r { fill: #db4437; } .ch-y { fill: #f4c20d; } .ch-g { fill: #0f9d58; } .ch-w { fill: #fff; } .ch-b { fill: #4285f4; }
.av1 { fill: #5a3a28; } .av1b { fill: #f0d8c8; } .av2 { fill: #4a5a40; } .av2b { fill: #8080b0; }
.pp-o { fill: #c02020; stroke: #801010; } .pp-i { fill: #f4d8d8; } .pp-t { fill: #c04040; } .pp-c { fill: #c02020; } .pp-p { fill: none; stroke: #802020; stroke-width: 2; }
.grip { width: 3px; height: 38px; border-left: 1px solid #fff; border-right: 1px solid #808080; flex: none; }
.lang { margin-left: auto; font-size: 12px; margin-right: 1px; color: #111; }
.lang-sep { width: 2px; height: 26px; border-left: 1px solid #808080; border-right: 1px solid #fff; margin-right: 2px; }
.tray { width: 182px; height: 37px; display: flex; align-items: center; gap: 7px; padding: 0 2px 0 5px; border: 1px solid; border-color: #808080 #fff #fff #808080; }
.tr-k { fill: none; stroke: #111; stroke-width: 1.5; }
.tr-sp { fill: #c8c8c8; stroke: #808080; }
.tr-l { fill: none; stroke: #90a0c0; stroke-width: 1.3; }
.fl-w { fill: #e8e8f0; } .fl-r { fill: #c82020; } .fl-b { fill: #2030a0; }
.tr-net { fill: #a0a0a0; stroke: #505050; }
.tr-net2 { fill: #f0f0e0; stroke: #303030; }
.clock { flex: 1; margin-left: 3px; display: flex; flex-direction: column; align-items: center; font-size: 11px; line-height: 16px; color: #222; letter-spacing: .1px; }
.ds-b { fill: #1050b0; } .ds-l { fill: #60a0e8; } .ds-d { fill: #405060; }
```
